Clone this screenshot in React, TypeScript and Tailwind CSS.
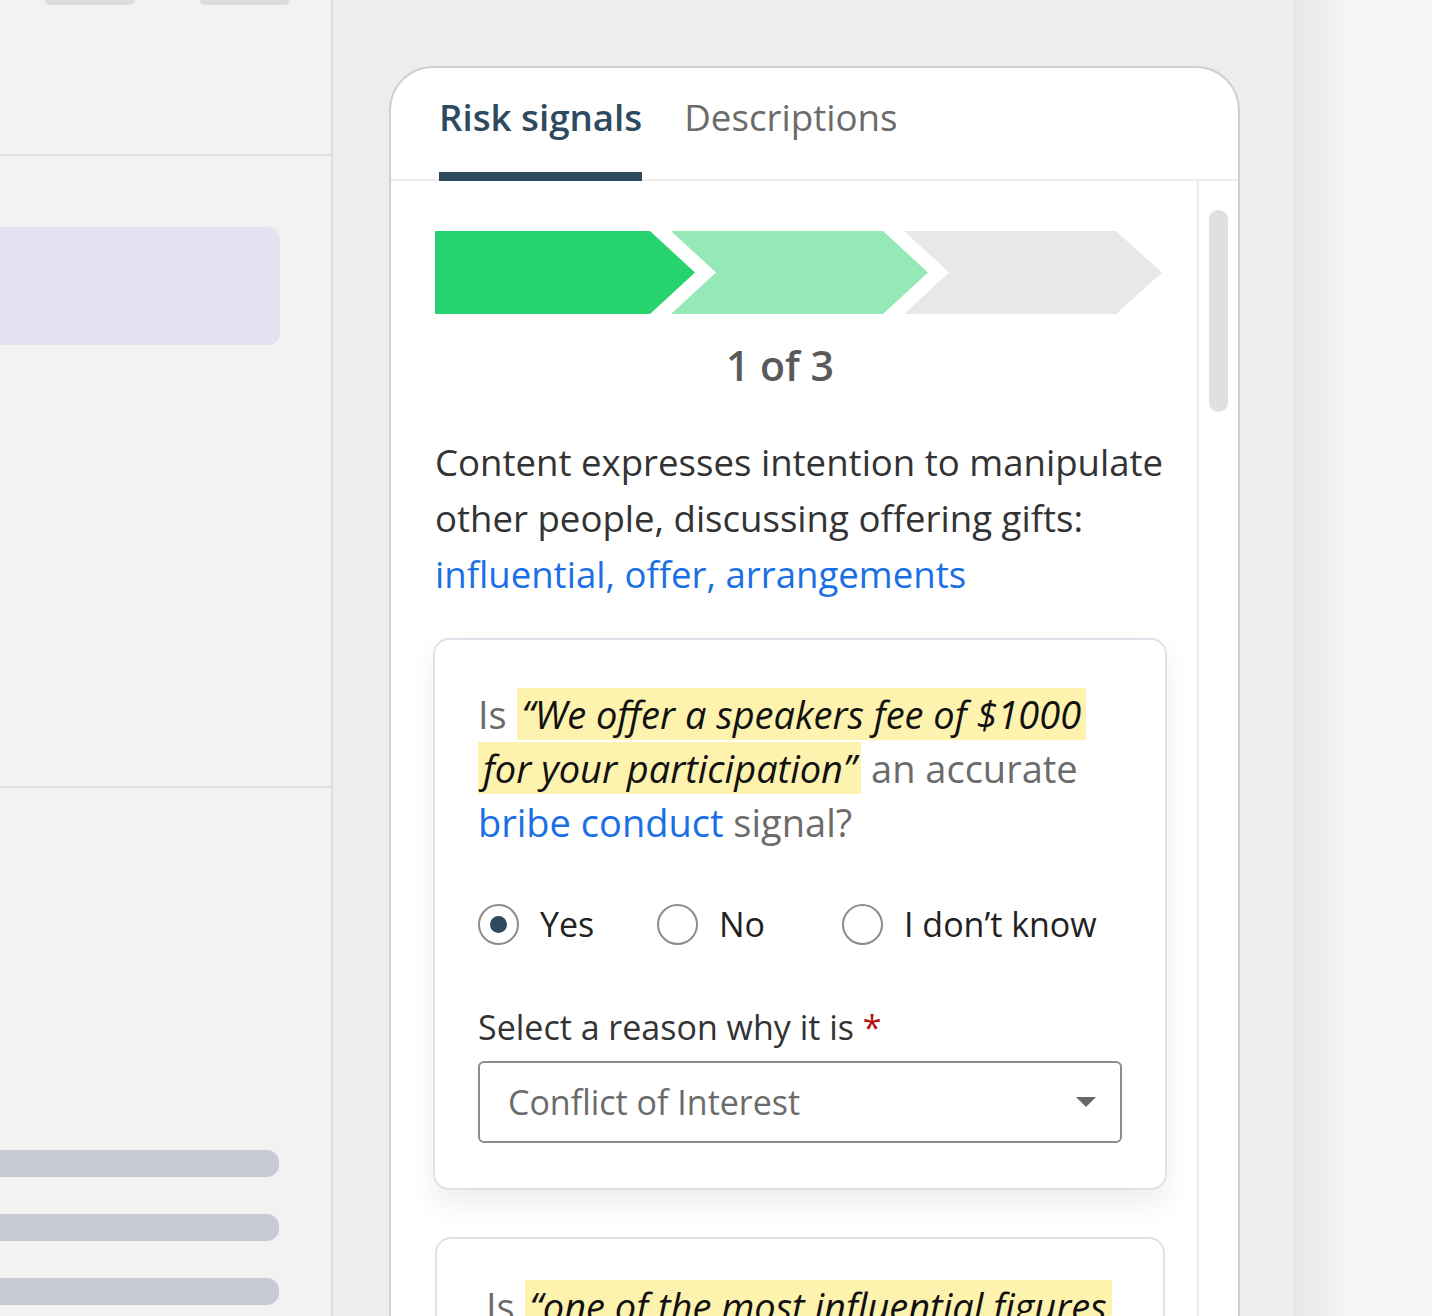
import React from 'react'

const font = { fontFamily: '"Open Sans", "Noto Sans", sans-serif' }

function Sidebar() {
  return (
    <div className="w-[333px] shrink-0 bg-[#f2f2f2] border-r-2 border-[#dedede] flex flex-col">
      <div className="h-[156px] border-b-2 border-[#dedede] flex gap-[65px] pl-[45px]">
        <div className="w-[90px] h-[5px] rounded-b-md bg-[#dcdce0]" />
        <div className="w-[90px] h-[5px] rounded-b-md bg-[#dcdce0]" />
      </div>
      <div className="h-[632px] border-b-2 border-[#dedede] pt-[71px]">
        <div className="w-[280px] h-[118px] rounded-r-xl bg-[#e6e2f2]" />
      </div>
      <div className="flex-1 pt-[362px] flex flex-col gap-[37px]">
        <div className="w-[279px] h-[27px] rounded-r-xl bg-[#c8cbd3]" />
        <div className="w-[279px] h-[27px] rounded-r-xl bg-[#c8cbd3]" />
        <div className="w-[279px] h-[27px] rounded-r-xl bg-[#c8cbd3]" />
      </div>
    </div>
  )
}

function Steps() {
  return (
    <svg width="727" height="83" viewBox="0 0 727 83" className="ml-[2px] block">
      <polygon points="0,0 215,0 260,41.5 215,83 0,83" fill="#27d36f" />
      <polygon points="236,0 448,0 493,41.5 448,83 236,83 281,41.5" fill="#95e9b6" />
      <polygon points="469,0 681,0 727,41.5 681,83 469,83 514,41.5" fill="#e8e8e8" />
    </svg>
  )
}

function Radio({ label, checked, width }: { label: string; checked?: boolean; width: string }) {
  return (
    <div className={`flex items-center gap-[21px] ${width}`}>
      <div className="w-[41px] h-[41px] rounded-full border-2 border-[#8c8c8c] flex items-center justify-center shrink-0">
        {checked && <div className="w-[17px] h-[17px] rounded-full bg-[#2e4a5e]" />}
      </div>
      <span className="text-[34px] leading-[46px] text-[#222]">{label}</span>
    </div>
  )
}

function QuestionCard() {
  return (
    <div className="border-2 border-[#dce3ea] rounded-2xl bg-white shadow-[0_14px_28px_rgba(0,0,0,0.07)] px-[43px] pt-[47px] pb-[45px]">
      <p className="text-[38px] leading-[54px] text-[#6b6b6b]">
        Is{' '}
        <span className="italic text-[#111] bg-[#fdf2ae] px-[5px] box-decoration-clone">
          “We offer a speakers fee of $1000 for your participation”
        </span>{' '}
        an accurate <span className="text-[#1b6fe4]">bribe conduct</span> signal?
      </p>
      <div className="flex items-center mt-[52px]">
        <Radio label="Yes" checked width="w-[179px]" />
        <Radio label="No" width="w-[185px]" />
        <Radio label="I don’t know" width="" />
      </div>
      <div className="mt-[57px] text-[34px] leading-[46px] text-[#333]">
        Select a reason why it is <span className="text-[#b3120f]">*</span>
      </div>
      <div className="mt-[11px] h-[82px] border-2 border-[#8c8c8c] rounded-md flex items-center justify-between pl-[28px] pr-[24px]">
        <span className="text-[34px] text-[#6b6b6b]">Conflict of Interest</span>
        <svg width="20" height="10" viewBox="0 0 20 10">
          <polygon points="0,0 20,0 10,10" fill="#666" />
        </svg>
      </div>
    </div>
  )
}

function NextCard() {
  return (
    <div className="mx-[2px] mt-[47px] border-2 border-[#dce3ea] rounded-2xl bg-white px-[49px] pt-[40px] pb-[44px]">
      <p className="text-[38px] leading-[54px] text-[#6b6b6b]">
        Is{' '}
        <span className="italic text-[#111] bg-[#fdf2ae] px-[5px] box-decoration-clone">
          “one of the most influential figures in the industry”
        </span>{' '}
        an accurate <span className="text-[#1b6fe4]">bribe conduct</span> signal?
      </p>
    </div>
  )
}

function Panel() {
  return (
    <div className="w-[851px] flex-1 flex flex-col bg-white border-2 border-b-0 border-[#d0d0d0] rounded-t-[44px] overflow-hidden">
      <div className="h-[113px] shrink-0 border-b-2 border-[#ececec] flex items-start gap-[42px] pl-[48px]">
        <div className="h-[113px] flex flex-col">
          <span className="pt-[25px] text-[36.7px] leading-[48px] font-semibold text-[#2e4a5e]">Risk signals</span>
          <div className="mt-auto h-[9px] bg-[#2e4a5e]" />
        </div>
        <span className="pt-[25px] text-[36.7px] leading-[48px] text-[#6b6b6b]">Descriptions</span>
      </div>
      <div className="flex-1 flex min-h-0">
        <div className="flex-1 overflow-hidden pl-[42px] pr-[30px] pt-[50px]">
          <Steps />
          <div className="mt-[27px] pr-[40px] text-center text-[41px] leading-[48px] font-semibold text-[#5a5a5a]">1 of 3</div>
          <p className="mt-[45px] pl-[2px] text-[36.6px] leading-[56px] text-[#333]">
            Content expresses intention to manipulate other people, discussing offering gifts:{' '}
            <span className="text-[#1b6fe4]">influential, offer, arrangements</span>
          </p>
          <div className="mt-[36px]">
            <QuestionCard />
            <NextCard />
          </div>
        </div>
        <div className="w-[41px] shrink-0 border-l-2 border-[#ececec] flex justify-center pt-[29px]">
          <div className="w-[19px] h-[202px] rounded-full bg-[#e0e0e0]" />
        </div>
      </div>
    </div>
  )
}

export default function App() {
  return (
    <div className="flex w-[1432px] h-[1316px] overflow-hidden" style={font}>
      <Sidebar />
      <div className="w-[959px] shrink-0 bg-[#ededed] pl-[56px] pt-[66px] flex flex-col">
        <Panel />
      </div>
      <div className="flex-1 border-l border-[#eeeeee] bg-linear-to-r from-[#e6e6e6] to-[#f6f6f6] to-40%" />
    </div>
  )
}
